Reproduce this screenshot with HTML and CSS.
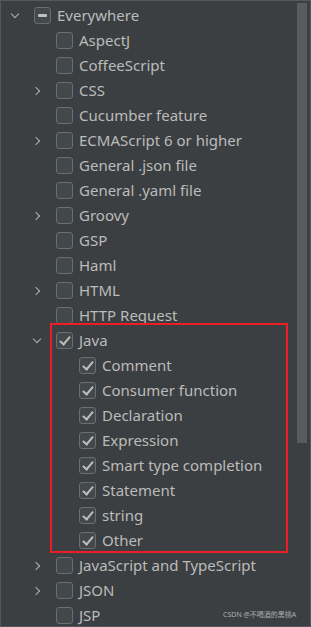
FILE: index.html
```html
<!DOCTYPE html>
<html lang="en">
<head>
    <meta charset="UTF-8">
    <meta name="viewport" content="width=device-width, initial-scale=1.0">
    <title>Postfix Completion</title>
    <link rel="stylesheet" href="styles.css">
</head>
<body>
    <div class="panel">
        <ul class="tree">
            <li class="row lvl0">
                <span class="arrow down"></span>
                <span class="box part"></span>
                <span class="label">Everywhere</span>
            </li>
            <li class="row lvl1"><span class="arrow"></span><span class="box"></span><span class="label">AspectJ</span></li>
            <li class="row lvl1"><span class="arrow"></span><span class="box"></span><span class="label">CoffeeScript</span></li>
            <li class="row lvl1"><span class="arrow right"></span><span class="box"></span><span class="label">CSS</span></li>
            <li class="row lvl1"><span class="arrow"></span><span class="box"></span><span class="label">Cucumber feature</span></li>
            <li class="row lvl1"><span class="arrow right"></span><span class="box"></span><span class="label">ECMAScript 6 or higher</span></li>
            <li class="row lvl1"><span class="arrow"></span><span class="box"></span><span class="label">General .json file</span></li>
            <li class="row lvl1"><span class="arrow"></span><span class="box"></span><span class="label">General .yaml file</span></li>
            <li class="row lvl1"><span class="arrow right"></span><span class="box"></span><span class="label">Groovy</span></li>
            <li class="row lvl1"><span class="arrow"></span><span class="box"></span><span class="label">GSP</span></li>
            <li class="row lvl1"><span class="arrow"></span><span class="box"></span><span class="label">Haml</span></li>
            <li class="row lvl1"><span class="arrow right"></span><span class="box"></span><span class="label">HTML</span></li>
            <li class="row lvl1"><span class="arrow"></span><span class="box"></span><span class="label">HTTP Request</span></li>
            <li class="row lvl1"><span class="arrow down"></span><span class="box on"></span><span class="label">Java</span></li>
            <li class="row lvl2"><span class="arrow"></span><span class="box on"></span><span class="label">Comment</span></li>
            <li class="row lvl2"><span class="arrow"></span><span class="box on"></span><span class="label">Consumer function</span></li>
            <li class="row lvl2"><span class="arrow"></span><span class="box on"></span><span class="label">Declaration</span></li>
            <li class="row lvl2"><span class="arrow"></span><span class="box on"></span><span class="label">Expression</span></li>
            <li class="row lvl2"><span class="arrow"></span><span class="box on"></span><span class="label">Smart type completion</span></li>
            <li class="row lvl2"><span class="arrow"></span><span class="box on"></span><span class="label">Statement</span></li>
            <li class="row lvl2"><span class="arrow"></span><span class="box on"></span><span class="label">string</span></li>
            <li class="row lvl2"><span class="arrow"></span><span class="box on"></span><span class="label">Other</span></li>
            <li class="row lvl1"><span class="arrow right"></span><span class="box"></span><span class="label">JavaScript and TypeScript</span></li>
            <li class="row lvl1"><span class="arrow right"></span><span class="box"></span><span class="label">JSON</span></li>
            <li class="row lvl1"><span class="arrow"></span><span class="box"></span><span class="label">JSP</span></li>
        </ul>

        <!-- 스크롤바, 강조 박스, 워터마크 -->
        <div class="thumb"></div>
        <div class="mark"></div>
        <div class="watermark">CSDN @不喝酒的黑桃A</div>
    </div>
</body>
</html>
```

FILE: styles.css
```css
/* tree panel */
body {
    margin: 0;
    padding: 0;
    background-color: #3c3f41;
    font-family: "Noto Sans", "Open Sans", sans-serif;
}
.panel {
    position: relative;
    width: 311px;
    height: 627px;
    box-sizing: border-box;
    border: 1px solid #55585a;
    background-color: #3c3f41;
    overflow: hidden;
}
.tree {
    list-style: none;
    margin: 0;
    padding: 2px 0 0 0;
}
.row {
    display: flex;
    align-items: center;
    height: 25px;
    color: #bbbbbb;
    font-size: 15px;
    white-space: nowrap;
}
.lvl0 { padding-left: 7px; }
.lvl1 { padding-left: 29px; }
.lvl2 { padding-left: 52px; }

.arrow {
    position: relative;
    width: 16px;
    height: 16px;
    margin-right: 10px;
    flex: none;
}
.arrow.down::before,
.arrow.right::before {
    content: "";
    position: absolute;
    width: 5px;
    height: 5px;
    border-right: 1.3px solid #afb1b3;
    border-bottom: 1.3px solid #afb1b3;
}
.arrow.down::before {
    left: 4px;
    top: 3px;
    transform: rotate(45deg);
}
.arrow.right::before {
    left: 3px;
    top: 5px;
    transform: rotate(-45deg);
}

.box {
    position: relative;
    width: 15px;
    height: 15px;
    flex: none;
    border: 1px solid #6b6e70;
    border-radius: 3px;
    background-color: #43494a;
    margin-right: 6px;
}
.box.part::before {
    content: "";
    position: absolute;
    left: 3px;
    top: 6px;
    width: 9px;
    height: 3px;
    border-radius: 1px;
    background-color: #c0c0c0;
}
.box.on::before {
    content: "";
    position: absolute;
    left: 5px;
    top: 1px;
    width: 4px;
    height: 9px;
    border-right: 2px solid #bdbdbd;
    border-bottom: 2px solid #bdbdbd;
    transform: rotate(40deg);
}
.label {
    line-height: 25px;
}

.thumb {
    position: absolute;
    left: 296px;
    top: 2px;
    width: 10px;
    height: 440px;
    background-color: #595b5d;
}
.mark {
    position: absolute;
    left: 49px;
    top: 322px;
    width: 234px;
    height: 226px;
    border: 2px solid #ee1c24;
}
.watermark {
    position: absolute;
    left: 222px;
    top: 608px;
    font-size: 7px;
    color: #c8c8c8;
    opacity: 0.8;
    font-family: "Noto Sans", "Noto Sans CJK SC", sans-serif;
}
```
